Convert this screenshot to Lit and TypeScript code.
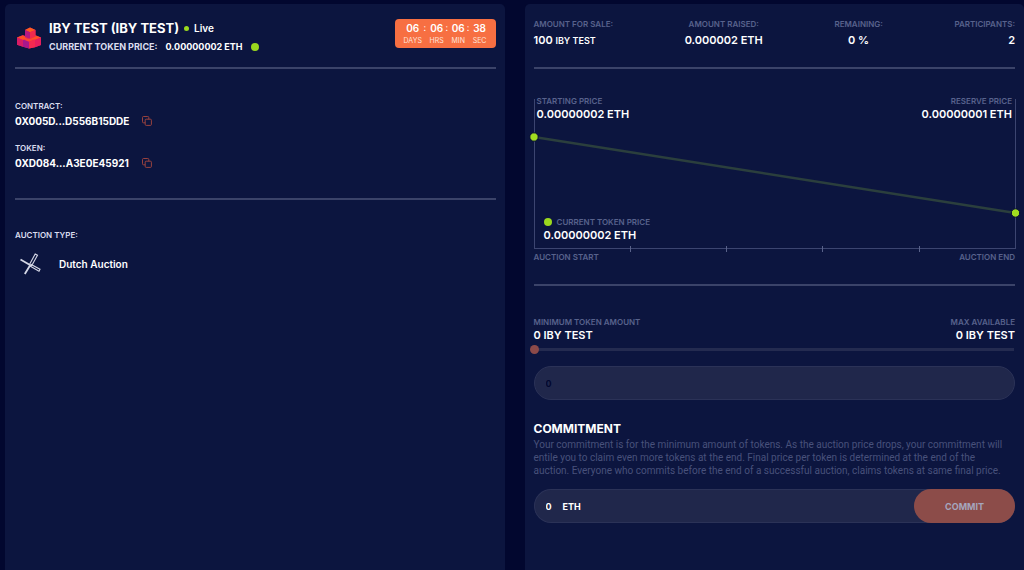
import { LitElement, html, css, svg } from "lit";
import { customElement, property, state } from "lit/decorators.js";

@customElement("copy-button")
class CopyButton extends LitElement {
  @property() label = "";

  static styles = css`
    :host { display: inline-flex; }
    button {
      display: flex;
      padding: 0;
      border: 0;
      background: none;
      color: #a8473f;
      cursor: pointer;
    }
  `;

  render() {
    return html`<button aria-label=${this.label}>
      <svg width="10" height="10" viewBox="0 0 10 10" fill="none" stroke="currentColor" stroke-width="0.9">
        <rect x="3.2" y="3.2" width="6.2" height="6.2" rx="1" />
        <path d="M3.2 6.8H1.5a1 1 0 0 1-1-1V1.5a1 1 0 0 1 1-1h4.3a1 1 0 0 1 1 1v1.7" />
      </svg>
    </button>`;
  }
}

@customElement("price-chart")
class PriceChart extends LitElement {
  static styles = css`
    :host { display: block; }
    .plot { display: grid; height: 154px; }
    svg { grid-area: 1 / 1; align-self: end; width: 100%; height: 150px; overflow: visible; }
    .notes {
      grid-area: 1 / 1;
      display: flex;
      flex-direction: column;
      justify-content: space-between;
      padding: 0 3px 7px;
    }
    .ends, .axis { display: flex; justify-content: space-between; }
    .end { text-align: right; }
    .now { padding-left: 7px; }
    .label { font-size: 8px; line-height: 12px; font-weight: 600; color: #58628c; }
    .value { font-size: 11px; line-height: 14px; font-weight: 600; color: #fff; }
    .now .label { display: flex; align-items: center; gap: 5px; }
    .dot { width: 8px; height: 8px; border-radius: 50%; background: #9bd81e; }
    .axis { padding-top: 2px; }
  `;

  render() {
    return html`
      <div class="plot">
        <svg aria-hidden="true">
          <g stroke="#3c4570" stroke-width="1" shape-rendering="crispEdges">
            <line x1="0" y1="0" x2="0" y2="150" />
            <line x1="100%" y1="0" x2="100%" y2="150" />
            <line x1="0" y1="149.5" x2="100%" y2="149.5" />
            ${["20%", "40%", "60%", "80%"].map(
              (x) => svg`<line x1=${x} y1="147" x2=${x} y2="153" stroke="#59628a" />`
            )}
          </g>
          <line x1="0" y1="38" x2="100%" y2="114" stroke="#2b3f3d" stroke-width="2.5" />
          <g fill="#a2dd20" stroke="#050b35" stroke-width="1">
            <circle cx="0" cy="38" r="4.2" />
            <circle cx="100%" cy="114" r="4.2" />
          </g>
        </svg>
        <div class="notes">
          <div class="ends">
            <div>
              <div class="label">STARTING PRICE</div>
              <div class="value">0.00000002 ETH</div>
            </div>
            <div class="end">
              <div class="label">RESERVE PRICE</div>
              <div class="value">0.00000001 ETH</div>
            </div>
          </div>
          <div class="now">
            <div class="label"><span class="dot"></span>CURRENT TOKEN PRICE</div>
            <div class="value">0.00000002 ETH</div>
          </div>
        </div>
      </div>
      <div class="axis label"><span>AUCTION START</span><span>AUCTION END</span></div>
    `;
  }
}

@customElement("app-root")
class AppRoot extends LitElement {
  @state() amount = "0";

  static styles = css`
    :host {
      display: block;
      font-family: "Inter", sans-serif;
      color: #fff;
      background: #02072f;
    }
    * { box-sizing: border-box; }
    .page {
      display: grid;
      grid-template-columns: 1fr 1fr;
      gap: 20px;
      min-height: 100vh;
      padding: 4px 0 0 5px;
    }
    .panel {
      display: flex;
      flex-direction: column;
      padding: 14px 9px 0 10px;
      border-radius: 5px 5px 0 0;
      background: #0c153f;
    }
    .sale { padding-left: 9px; }
    hr { width: 100%; height: 2px; margin: 0; border: 0; background: #3b4369; }
    h1, h2, p { margin: 0; }

    .head { display: flex; align-items: flex-start; justify-content: space-between; height: 49px; }
    .token { display: flex; align-items: center; gap: 8px; }
    .token svg { margin-left: 2px; margin-top: 2px; }
    .name { display: flex; align-items: center; gap: 5px; line-height: 20px; }
    h1 { font-size: 13px; font-weight: 700; line-height: 20px; }
    .live { font-size: 10px; font-weight: 600; }
    .dot { border-radius: 50%; background: #9bd81e; width: 8px; height: 8px; }
    .small { width: 5px; height: 5px; }
    .price { display: flex; align-items: center; gap: 8px; font-size: 9px; line-height: 18px; font-weight: 700; color: #dcdef0; }
    .price b { font-weight: 700; color: #fff; }

    .timer {
      display: grid;
      grid-template-columns: repeat(4, auto);
      column-gap: 7px;
      width: 101px;
      height: 29px;
      margin-top: 1px;
      padding: 3px 9px 0;
      border-radius: 4px;
      background: #f76f42;
      text-align: center;
      justify-content: space-between;
    }
    .unit { position: relative; }
    .unit b { display: block; font-size: 10px; line-height: 12px; font-weight: 600; }
    .unit span { display: block; font-size: 7px; line-height: 13px; color: #ffe3d8; }
    .unit + .unit::before {
      content: ":";
      position: absolute;
      left: -6px;
      top: 0;
      font-size: 9px;
      line-height: 11px;
    }

    .caption { font-size: 8px; line-height: 12px; font-weight: 600; color: #dcdef0; }
    .addresses { display: flex; flex-direction: column; gap: 12px; padding: 31px 0 26px; }
    .address { display: flex; align-items: center; gap: 13px; font-size: 10px; line-height: 18px; font-weight: 700; }
    .type { padding-top: 29px; }
    .kind { display: flex; align-items: center; gap: 18px; padding: 12px 0 0 5px; font-size: 10px; font-weight: 600; }

    .stats { display: flex; justify-content: space-between; height: 49px; text-align: center; }
    .stats > :first-child { text-align: left; }
    .stats > :last-child { text-align: right; }
    .label { font-size: 8px; line-height: 12px; font-weight: 600; color: #58628c; }
    .value { font-size: 11px; line-height: 14px; font-weight: 600; }
    .stats .value { line-height: 20px; }
    .value small { font-size: 9px; }
    price-chart { padding: 26px 0 21px; }

    .range { display: flex; justify-content: space-between; padding-top: 30px; }
    .range > :last-child { text-align: right; }
    .slider {
      appearance: none;
      width: calc(100% + 8px);
      height: 9px;
      margin: 3px -4px 12px;
      background: linear-gradient(#242b50, #242b50) center / calc(100% - 9px) 3px no-repeat;
    }
    .slider::-webkit-slider-thumb {
      appearance: none;
      width: 9px;
      height: 9px;
      border-radius: 50%;
      background: #8c4a49;
    }
    .field {
      display: flex;
      align-items: center;
      height: 34px;
      padding: 0 0 0 11px;
      border: 1px solid #2b3257;
      border-radius: 17px;
      background: #20274b;
      font-size: 9px;
      font-weight: 700;
    }
    .field input {
      width: 100%;
      min-width: 0;
      padding: 0;
      border: 0;
      outline: 0;
      background: none;
      color: #02072f;
      font: inherit;
    }
    .pay input { flex: none; width: 17px; color: #fff; }
    .pay label { flex: 1; }
    h2 { padding-top: 20px; font-size: 12px; line-height: 18px; font-weight: 700; }
    p { padding-bottom: 12px; font-family: "Roboto", sans-serif; font-size: 10px; line-height: 13px; color: #48517b; }
    .pay { border-right: 0; }
    .pay button {
      width: 101px;
      height: 34px;
      border: 0;
      border-radius: 17px;
      background: #8c4c49;
      color: #a5a6bd;
      font: 700 9px "Inter", sans-serif;
    }
  `;

  private logo() {
    return html`<svg width="24" height="22" viewBox="0 0 24 22" aria-hidden="true">
      <path d="M0 10.5 6 8l6 2.5 6-2.5 6 2.5V18l-6 2.3-6 1.2-6-1.7-6-2z" fill="#e5205f" />
      <path d="M8 3 13 .6 18.500 3v7L13 12 8 10z" fill="#cf1668" />
      <path d="M8 3 13 .6 18.500 3 13 5.200z" fill="#ff5b20" />
      <path d="M8 3l5 2.200V12L8 10z" fill="#b41883" />
      <path d="M13 5.200 18.500 3v7L13 12z" fill="#f02a4d" />
      <path d="M0 10.500 5.500 8.500 8 9.500v1L11 11 6 13zM13 12l5.500-2.500V8.500L24 10.500 18.500 13z" fill="#ff4f25" />
      <path d="M0 10.500 6 13v6.800L0 17.800z" fill="#d81c65" />
      <path d="M6 13l6-1v9.500l-6-1.700z" fill="#a8178c" />
      <path d="M6.500 12.500 12 11.500l6 1-6 2.300z" fill="#ff4435" />
      <path d="M12 14.800 18 12.500v7.800l-6 1.200z" fill="#f42950" />
      <path d="M18 12.800 24 10.500V18l-6 2.300z" fill="#e61e5e" />
    </svg>`;
  }

  private auctionIcon() {
    return html`<svg width="21" height="22" viewBox="0 0 21 22" fill="none" stroke="#d5d7e6" aria-hidden="true">
      <path d="M.5 6.500 10 12M4.800 21 10 12.500" stroke-width="1.800" />
      <path d="M9.500 11.500 15.200 1l2.300 1.200-5.900 10.500z" stroke-width="1.100" />
      <path d="M10 13l9 5.200 1-1.900-8.800-4.900z" stroke-width="1.100" />
    </svg>`;
  }

  private stat(label: string, value: unknown) {
    return html`<div><div class="label">${label}</div><div class="value">${value}</div></div>`;
  }

  render() {
    const time = [["06", "DAYS"], ["06", "HRS"], ["06", "MIN"], ["38", "SEC"]];
    return html`
      <main class="page">
        <section class="panel">
          <div class="head">
            <div class="token">
              ${this.logo()}
              <div>
                <div class="name">
                  <h1>IBY TEST (IBY TEST)</h1>
                  <span class="dot small"></span><span class="live">Live</span>
                </div>
                <div class="price">CURRENT TOKEN PRICE: <b>0.00000002 ETH</b><span class="dot"></span></div>
              </div>
            </div>
            <div class="timer">
              ${time.map(([n, u]) => html`<div class="unit"><b>${n}</b><span>${u}</span></div>`)}
            </div>
          </div>
          <hr />
          <div class="addresses">
            <div>
              <div class="caption">CONTRACT:</div>
              <div class="address">0X005D...D556B15DDE <copy-button label="Copy contract"></copy-button></div>
            </div>
            <div>
              <div class="caption">TOKEN:</div>
              <div class="address">0XD084...A3E0E45921 <copy-button label="Copy token"></copy-button></div>
            </div>
          </div>
          <hr />
          <div class="type">
            <div class="caption">AUCTION TYPE:</div>
            <div class="kind">${this.auctionIcon()} Dutch Auction</div>
          </div>
        </section>

        <section class="panel sale">
          <div class="stats">
            ${this.stat("AMOUNT FOR SALE:", html`100 <small>IBY TEST</small>`)}
            ${this.stat("AMOUNT RAISED:", "0.000002 ETH")}
            ${this.stat("REMAINING:", "0 %")}
            ${this.stat("PARTICIPANTS:", "2")}
          </div>
          <hr />
          <price-chart></price-chart>
          <hr />
          <div class="range">
            ${this.stat("MINIMUM TOKEN AMOUNT", "0 IBY TEST")}
            ${this.stat("MAX AVAILABLE", "0 IBY TEST")}
          </div>
          <input class="slider" type="range" min="0" max="100" .value=${this.amount} aria-label="Token amount"
            @input=${(e: Event) => (this.amount = (e.target as HTMLInputElement).value)} />
          <div class="field">
            <input type="text" .value=${this.amount} aria-label="Token amount" />
          </div>
          <h2>COMMITMENT</h2>
          <p>
            Your commitment is for the minimum amount of tokens. As the auction price drops, your commitment will<br />
            entile you to claim even more tokens at the end. Final price per token is determined at the end of the<br />
            auction. Everyone who commits before the end of a successful auction, claims tokens at same final price.
          </p>
          <div class="field pay">
            <input id="eth" type="text" .value=${this.amount} />
            <label for="eth">ETH</label>
            <button>COMMIT</button>
          </div>
        </section>
      </main>
    `;
  }
}
